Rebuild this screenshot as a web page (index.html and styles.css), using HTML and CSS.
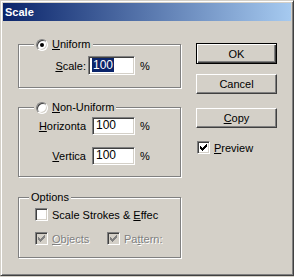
FILE: index.html
```html
<!DOCTYPE html>
<html lang="en">
<head>
  <meta charset="UTF-8">
  <title>Scale</title>
  <link rel="stylesheet" href="styles.css">
</head>
<body>

  <div class="window">
    <div class="titlebar">Scale</div>

    <div class="dialog">
      <div class="main">

        <div class="group group-uniform">
          <div class="legend">
            <span class="radio checked"></span>
            <span><u>U</u>niform</span>
          </div>
          <div class="row row-scale">
            <span class="label"><u>S</u>cale:</span>
            <div class="field field-wide"><span class="sel">100</span></div>
            <span class="unit">%</span>
          </div>
        </div>

        <div class="group group-nonuniform">
          <div class="legend">
            <span class="radio"></span>
            <span><u>N</u>on-Uniform</span>
          </div>
          <div class="row row-first">
            <span class="label"><u>H</u>orizonta</span>
            <div class="field">100</div>
            <span class="unit">%</span>
          </div>
          <div class="row row-second">
            <span class="label"><u>V</u>ertica</span>
            <div class="field">100</div>
            <span class="unit">%</span>
          </div>
        </div>

        <div class="group group-options">
          <div class="legend legend-text">Options</div>
          <div class="check-row check-first">
            <span class="check"></span>
            <span>Scale Strokes &amp; <u>E</u>ffec</span>
          </div>
          <div class="check-row check-second">
            <div class="check-item disabled">
              <span class="check checked">
                <svg viewBox="0 0 7 7" width="7" height="7"><path d="M6 0h1v1h-1z M5 1h2v1h-2z M0 2h1v1h-1z M4 2h3v1h-3z M0 3h2v1h-2z M3 3h3v1h-3z M0 4h5v1h-5z M1 5h3v1h-3z M2 6h1v1h-1z"/></svg>
              </span>
              <span class="dim"><u>O</u>bjects</span>
            </div>
            <div class="check-item disabled">
              <span class="check checked">
                <svg viewBox="0 0 7 7" width="7" height="7"><path d="M6 0h1v1h-1z M5 1h2v1h-2z M0 2h1v1h-1z M4 2h3v1h-3z M0 3h2v1h-2z M3 3h3v1h-3z M0 4h5v1h-5z M1 5h3v1h-3z M2 6h1v1h-1z"/></svg>
              </span>
              <span class="dim">Pa<u>t</u>tern:</span>
            </div>
          </div>
        </div>

      </div>

      <div class="side">
        <button class="btn btn-default">OK</button>
        <button class="btn btn-cancel">Cancel</button>
        <button class="btn btn-copy"><u>C</u>opy</button>
        <div class="check-row preview">
          <span class="check checked">
            <svg viewBox="0 0 7 7" width="7" height="7"><path d="M6 0h1v1h-1z M5 1h2v1h-2z M0 2h1v1h-1z M4 2h3v1h-3z M0 3h2v1h-2z M3 3h3v1h-3z M0 4h5v1h-5z M1 5h3v1h-3z M2 6h1v1h-1z"/></svg>
          </span>
          <span><u>P</u>review</span>
        </div>
      </div>
    </div>
  </div>

</body>
</html>
```

FILE: styles.css
```css
/* Classic dialog look */
body {
  margin: 0;
  background-color: #d4d0c8;
  font-family: 'Liberation Sans', Arial, sans-serif;
  font-size: 11px;
  color: #000;
}

.window {
  width: 294px;
  height: 276px;
  box-sizing: border-box;
  padding: 2px;
  background-color: #d4d0c8;
  border: 1px solid;
  border-color: #d4d0c8 #404040 #404040 #d4d0c8;
  box-shadow: inset 1px 1px 0 #fff, inset -1px -1px 0 #808080;
}

.titlebar {
  height: 18px;
  line-height: 18px;
  padding-left: 2px;
  color: #fff;
  font-weight: bold;
  font-size: 11px;
  background: linear-gradient(to right, #0a246a, #a6caf0);
}

.dialog {
  display: flex;
  padding-left: 15px;
}

.main {
  width: 163px;
  padding-top: 23px;
}

.side {
  margin-left: 15px;
  padding-top: 22px;
  display: flex;
  flex-direction: column;
  align-items: flex-start;
}

/* Group boxes */
.group {
  box-sizing: border-box;
  border: 1px solid #808080;
  box-shadow: 1px 1px 0 #fff, inset 1px 1px 0 #fff;
}

.group-uniform {
  height: 44px;
}

.group-nonuniform {
  height: 70px;
  margin-top: 19px;
}

.group-options {
  height: 61px;
  margin-top: 20px;
}

.legend {
  display: flex;
  align-items: center;
  gap: 4px;
  width: fit-content;
  height: 13px;
  line-height: 13px;
  margin: -7px 0 0 15px;
  padding: 0 2px;
  background-color: #d4d0c8;
}

.legend-text {
  margin-left: 10px;
}

/* Radio buttons */
.radio {
  width: 12px;
  height: 12px;
  box-sizing: border-box;
  border-radius: 50%;
  border: 1px solid;
  border-color: #808080 #fff #fff #808080;
  background-color: #fff;
  box-shadow: inset 1px 1px 0 #404040, inset -1px -1px 0 #d4d0c8;
  display: flex;
  align-items: center;
  justify-content: center;
}

.radio.checked::after {
  content: "";
  width: 4px;
  height: 4px;
  border-radius: 50%;
  background-color: #000;
}

/* Field rows */
.row {
  display: flex;
  align-items: center;
}

.row-scale {
  margin-top: 5px;
}

.row-first {
  margin-top: 3px;
}

.row-second {
  margin-top: 12px;
}

.label {
  width: 67px;
  text-align: right;
}

.field {
  box-sizing: border-box;
  width: 43px;
  height: 18px;
  margin-left: 6px;
  padding-left: 3px;
  line-height: 15px;
  font-size: 12px;
  background-color: #fff;
  border: 1px solid;
  border-color: #808080 #fff #fff #808080;
  box-shadow: inset 1px 1px 0 #404040, inset -1px -1px 0 #d4d0c8;
}

.field-wide {
  width: 47px;
  height: 19px;
  margin-left: 2px;
  line-height: 16px;
}

.sel {
  background-color: #0a246a;
  color: #fff;
  padding: 0 1px;
}

.unit {
  margin-left: 5px;
}

/* Checkboxes */
.check-row {
  display: flex;
  align-items: center;
  gap: 4px;
  height: 13px;
}

.group .check-row {
  padding-left: 16px;
}

.check-first {
  margin-top: 4px;
}

.check-second {
  margin-top: 11px;
  gap: 0;
}

.check-item {
  display: flex;
  align-items: center;
  gap: 4px;
  width: 72px;
}

.check {
  width: 13px;
  height: 13px;
  box-sizing: border-box;
  border: 1px solid;
  border-color: #808080 #fff #fff #808080;
  background-color: #fff;
  box-shadow: inset 1px 1px 0 #404040, inset -1px -1px 0 #d4d0c8;
  display: flex;
  align-items: center;
  justify-content: center;
}

.check svg {
  display: block;
  fill: #000;
}

.disabled .check {
  background-color: #d4d0c8;
}

.disabled .check svg {
  fill: #808080;
}

.dim {
  color: #808080;
  text-shadow: 1px 1px 0 #fff;
}

/* Buttons */
.btn {
  box-sizing: border-box;
  width: 81px;
  height: 20px;
  padding: 0;
  font-family: inherit;
  font-size: 11px;
  color: #000;
  background-color: #d4d0c8;
  border: 1px solid;
  border-color: #fff #404040 #404040 #fff;
  box-shadow: inset -1px -1px 0 #808080;
}

.btn-default {
  height: 21px;
  border: 1px solid #000;
  box-shadow: inset 1px 1px 0 #fff, inset -1px -1px 0 #404040, inset -2px -2px 0 #808080;
}

.btn-cancel {
  margin-top: 10px;
}

.btn-copy {
  margin-top: 14px;
}

.preview {
  margin-top: 13px;
  margin-left: 1px;
}
```
